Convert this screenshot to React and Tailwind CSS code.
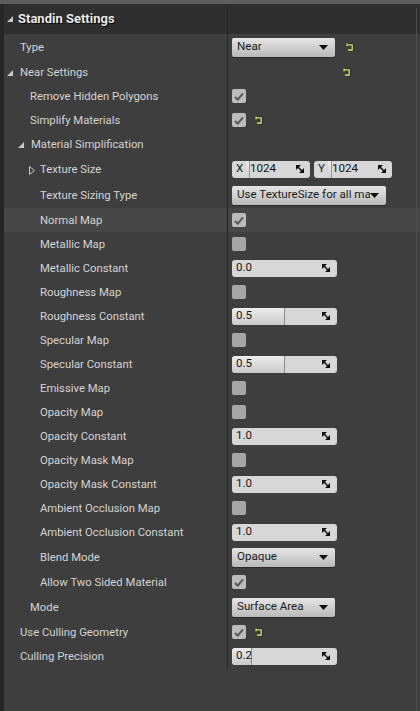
import React from 'react';

// Little UE-style glyphs
function OpenArrow() {
  return (
    <svg width="6" height="6" viewBox="0 0 6 6" className="shrink-0">
      <polygon points="6,0 6,6 0,6" fill="#c8c8c8" />
    </svg>
  );
}

function ClosedArrow() {
  return (
    <svg width="6" height="9" viewBox="0 0 6 9" className="shrink-0">
      <polygon points="0.5,0.5 5.5,4.5 0.5,8.5" fill="none" stroke="#c8c8c8" strokeWidth="1" />
    </svg>
  );
}

function ResetIcon() {
  return (
    <svg width="10" height="9" viewBox="0 0 10 9" className="shrink-0">
      <path d="M2 0.5 V3.2 M2 1.8 H7.2 V7 H3" fill="none" stroke="#1c1c1c" strokeWidth="2.6" />
      <path d="M2 0.5 V3.2 M2 1.8 H7.2 V7 H3" fill="none" stroke="#e6e86a" strokeWidth="1.3" />
    </svg>
  );
}

function Check({ on }) {
  return (
    <div className={`w-[14px] h-[14px] rounded-[2px] flex items-center justify-center ${on ? 'bg-[#bcbcbc]' : 'bg-[#a6a6a6]'}`}>
      {on && (
        <svg width="10" height="9" viewBox="0 0 10 9">
          <path d="M1 5 L3.8 7.6 L9 1.4" fill="none" stroke="#5c5c5c" strokeWidth="2.2" />
        </svg>
      )}
    </div>
  );
}

function SpinArrows() {
  return (
    <svg width="8" height="8" viewBox="0 0 8 8" className="shrink-0">
      <polygon points="0,0 5,0 0,5" fill="#111" />
      <polygon points="8,8 3,8 8,3" fill="#111" />
      <path d="M1 1 L7 7" stroke="#111" strokeWidth="1.5" />
    </svg>
  );
}

function Combo({ text, w = 'w-[103px]' }) {
  return (
    <div className={`${w} h-[19px] rounded-[2px] bg-gradient-to-b from-[#e6e6e6] to-[#b9b9b9] shadow-[0_1px_0_#2a2a2a] flex items-center pl-[5px] pr-[7px] overflow-hidden`}>
      <span className="flex-1 text-[11.6px] text-[#1b1b1b] whitespace-nowrap overflow-hidden">{text}</span>
      <svg width="9" height="5" viewBox="0 0 9 5" className="shrink-0">
        <polygon points="0,0 9,0 4.5,5" fill="#111" />
      </svg>
    </div>
  );
}

// numeric entry with the light drag handle on its left
function Spin({ value, handle }) {
  return (
    <div className="w-[105px] h-[17px] rounded-[3px] bg-[#d7d7d7] flex items-center overflow-hidden relative">
      {handle && (
        <div className={`${handle} h-full bg-gradient-to-b from-[#ededed] to-[#cacaca] border-r border-[#8e8e8e] rounded-l-[3px] shrink-0`} />
      )}
      <span className={`text-[11.6px] text-[#151515] ${handle ? 'absolute left-[4px]' : 'pl-[4px]'} flex-1`}>{value}</span>
      <div className="ml-auto pr-[7px] flex">
        <SpinArrows />
      </div>
    </div>
  );
}

function AxisBox({ axis, value }) {
  return (
    <div className="w-[78px] h-[17px] rounded-[3px] bg-[#d7d7d7] flex items-center overflow-hidden">
      <div className="w-[14px] h-full flex items-center pl-[4px] text-[11.6px] text-[#222] shrink-0">
        {axis}
      </div>
      <div className="w-[4px] h-full bg-gradient-to-b from-[#ececec] to-[#cdcdcd] border-r border-[#9a9a9a] shrink-0" />
      <span className="text-[11.6px] text-[#151515] flex-1">{value}</span>
      <div className="pr-[6px] flex">
        <SpinArrows />
      </div>
    </div>
  );
}

const rows = [
  { label: 'Type', h: 'h-[26px]', pl: 'pl-[16px]', value: <><Combo text="Near" /><span className="ml-[10px]"><ResetIcon /></span></> },
  { label: 'Near Settings', h: 'h-[24px]', pl: 'pl-[3px]', arrow: 'open', value: <span className="ml-[110px]"><ResetIcon /></span> },
  { label: 'Remove Hidden Polygons', h: 'h-[24px]', pl: 'pl-[26px]', value: <Check on /> },
  { label: 'Simplify Materials', h: 'h-[24px]', pl: 'pl-[26px]', value: <><Check on /><span className="ml-[8px]"><ResetIcon /></span></> },
  { label: 'Material Simplification', h: 'h-[24px]', pl: 'pl-[14px]', arrow: 'open', value: null },
  { label: 'Texture Size', h: 'h-[26px]', pl: 'pl-[25px]', arrow: 'closed', value: <div className="flex gap-[4px]"><AxisBox axis="X" value="1024" /><AxisBox axis="Y" value="1024" /></div> },
  { label: 'Texture Sizing Type', h: 'h-[26px]', pl: 'pl-[36px]', value: <Combo text="Use TextureSize for all ma" w="w-[154px]" /> },
  { label: 'Normal Map', h: 'h-[24px]', pl: 'pl-[36px]', hl: true, value: <Check on /> },
  { label: 'Metallic Map', h: 'h-[24px]', pl: 'pl-[36px]', value: <Check /> },
  { label: 'Metallic Constant', h: 'h-[24px]', pl: 'pl-[36px]', value: <Spin value="0.0" /> },
  { label: 'Roughness Map', h: 'h-[24px]', pl: 'pl-[36px]', value: <Check /> },
  { label: 'Roughness Constant', h: 'h-[24px]', pl: 'pl-[36px]', value: <Spin value="0.5" handle="w-[53px]" /> },
  { label: 'Specular Map', h: 'h-[24px]', pl: 'pl-[36px]', value: <Check /> },
  { label: 'Specular Constant', h: 'h-[24px]', pl: 'pl-[36px]', value: <Spin value="0.5" handle="w-[53px]" /> },
  { label: 'Emissive Map', h: 'h-[24px]', pl: 'pl-[36px]', value: <Check /> },
  { label: 'Opacity Map', h: 'h-[24px]', pl: 'pl-[36px]', value: <Check /> },
  { label: 'Opacity Constant', h: 'h-[24px]', pl: 'pl-[36px]', value: <Spin value="1.0" /> },
  { label: 'Opacity Mask Map', h: 'h-[24px]', pl: 'pl-[36px]', value: <Check /> },
  { label: 'Opacity Mask Constant', h: 'h-[24px]', pl: 'pl-[36px]', value: <Spin value="1.0" /> },
  { label: 'Ambient Occlusion Map', h: 'h-[24px]', pl: 'pl-[36px]', value: <Check /> },
  { label: 'Ambient Occlusion Constant', h: 'h-[24px]', pl: 'pl-[36px]', value: <Spin value="1.0" /> },
  { label: 'Blend Mode', h: 'h-[26px]', pl: 'pl-[36px]', value: <Combo text="Opaque" /> },
  { label: 'Allow Two Sided Material', h: 'h-[24px]', pl: 'pl-[36px]', value: <Check on /> },
  { label: 'Mode', h: 'h-[26px]', pl: 'pl-[26px]', value: <Combo text="Surface Area" /> },
  { label: 'Use Culling Geometry', h: 'h-[24px]', pl: 'pl-[16px]', value: <><Check on /><span className="ml-[8px]"><ResetIcon /></span></> },
  { label: 'Culling Precision', h: 'h-[24px]', pl: 'pl-[16px]', value: <Spin value="0.2" handle="w-[20px]" /> },
];

export default function App() {
  return (
    <div className="w-[420px] h-[711px] bg-[#3e3e3e] flex flex-col overflow-hidden relative font-['Roboto','Noto_Sans',sans-serif]">
      <div className="h-[4px] bg-[#5e5e5e] shrink-0" />
      <div className="flex flex-1">
        <div className="w-[4px] bg-[#262626] shrink-0" />
        <div className="flex-1 flex flex-col">
          {/* category header */}
          <div className="h-[30px] bg-[#2f2f2f] flex shrink-0">
            <div className="w-[224px] border-r border-[#262626] flex items-center pl-[3px] gap-[5px]">
              <OpenArrow />
              <span className="text-[13px] font-bold text-[#e8e8e8] [text-shadow:1px_1px_1px_#000]">Standin Settings</span>
            </div>
          </div>
          {rows.map((r) => (
            <div key={r.label} className={`${r.h} flex shrink-0 ${r.hl ? 'bg-[#474747]' : ''}`}>
              <div className={`w-[224px] border-r border-[#262626] flex items-center pt-[2px] ${r.pl}`}>
                {r.arrow === 'open' && <span className="w-[13px] flex"><OpenArrow /></span>}
                {r.arrow === 'closed' && <span className="w-[11px] flex"><ClosedArrow /></span>}
                <span className="text-[11.3px] text-[#d4d4d4] whitespace-nowrap">{r.label}</span>
              </div>
              <div className="flex-1 flex items-center pl-[4px]">{r.value}</div>
            </div>
          ))}
        </div>
      </div>
      {/* scrollbar track edge */}
      <div className="absolute right-[3px] top-[8px] bottom-0 w-[1px] bg-[#4c4c4c]" />
    </div>
  );
}
